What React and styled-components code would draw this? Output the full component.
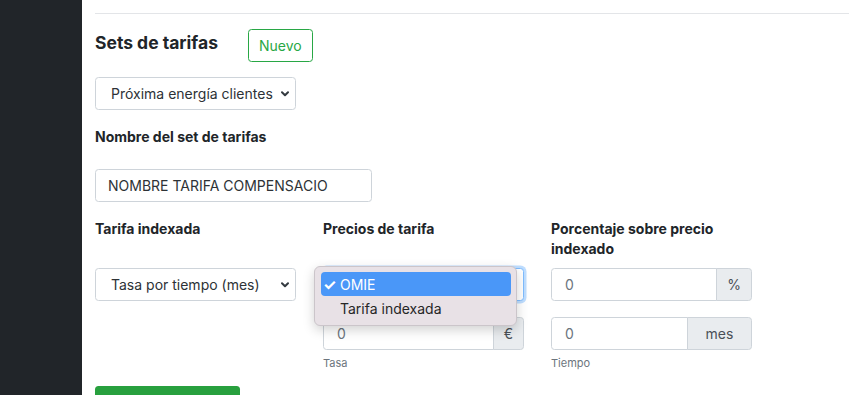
import React from "react";
import styled, { createGlobalStyle } from "styled-components";

const GlobalStyle = createGlobalStyle`
  html, body {
    margin: 0;
    padding: 0;
    background: #fff;
  }
  body {
    font-family: Inter, "Liberation Sans", Arial, sans-serif;
    color: #212529;
    overflow: hidden;
  }
  * {
    box-sizing: border-box;
  }
`;

const chevron =
  "data:image/svg+xml;utf8,<svg xmlns='http://www.w3.org/2000/svg' width='8' height='6' viewBox='0 0 8 6'><path d='M1 1.2 L4 4.2 L7 1.2' fill='none' stroke='%23343a40' stroke-width='2' stroke-linecap='round' stroke-linejoin='round'/></svg>";

export default function App() {
  return (
    <>
      <GlobalStyle />
      <Layout>
        <Sidebar />
        <Main>
          <Divider />
          <TitleRow>
            <Title>Sets de tarifas</Title>
            <OutlineButton>Nuevo</OutlineButton>
          </TitleRow>
          <Select width="201px">Próxima energía clientes</Select>
          <FieldLabel>Nombre del set de tarifas</FieldLabel>
          <TextInput width="277px">NOMBRE TARIFA COMPENSACIO</TextInput>

          <Columns>
            <Column>
              <ColumnLabel>Tarifa indexada</ColumnLabel>
              <Select width="201px">Tasa por tiempo (mes)</Select>
            </Column>

            <Column>
              <ColumnLabel>Precios de tarifa</ColumnLabel>
              <SelectWrap>
                <Select width="201px" focused />
                <Popup>
                  <PopupItem active>
                    <Check>✓</Check>OMIE
                  </PopupItem>
                  <PopupItem>Tarifa indexada</PopupItem>
                </Popup>
              </SelectWrap>
              <InputGroup>
                <GroupInput>0</GroupInput>
                <Addon>€</Addon>
              </InputGroup>
              <Help>Tasa</Help>
            </Column>

            <Column>
              <ColumnLabel>Porcentaje sobre precio indexado</ColumnLabel>
              <InputGroup>
                <GroupInput>0</GroupInput>
                <Addon>%</Addon>
              </InputGroup>
              <InputGroup>
                <GroupInput>0</GroupInput>
                <Addon wide>mes</Addon>
              </InputGroup>
              <Help>Tiempo</Help>
            </Column>
          </Columns>

          <SaveButton />
        </Main>
      </Layout>
    </>
  );
}

const Layout = styled.div`
  display: flex;
  width: 851px;
  height: 395px;
  overflow: hidden;
`;

const Sidebar = styled.aside`
  width: 82px;
  flex-shrink: 0;
  background: #212529;
`;

const Main = styled.main`
  flex: 1;
  padding: 13px 2px 0 13px;
  display: flex;
  flex-direction: column;
  align-items: flex-start;

  & > * {
    flex-shrink: 0;
  }
`;

const Divider = styled.hr`
  width: 100%;
  margin: 0;
  border: 0;
  border-top: 1px solid #e3e5e8;
`;

const TitleRow = styled.div`
  display: flex;
  align-items: flex-start;
  gap: 30px;
  margin-top: 15px;
`;

const Title = styled.h5`
  margin: 0;
  font-size: 17.5px;
  font-weight: 700;
  line-height: 28px;
  color: #212529;
`;

const OutlineButton = styled.button`
  height: 33px;
  padding: 0 10px;
  border: 1px solid #28a745;
  border-radius: 3.5px;
  background: #fff;
  color: #28a745;
  font-family: inherit;
  font-size: 14px;
`;

const Select = styled.div`
  width: ${(p) => p.width};
  height: 33px;
  flex-shrink: 0;
  margin-top: ${(p) => (p.focused ? "0" : "15px")};
  padding: 0 28px 0 15px;
  display: flex;
  align-items: center;
  border: 1px solid ${(p) => (p.focused ? "#80bdff" : "#ced4da")};
  border-radius: 3.5px;
  box-shadow: ${(p) => (p.focused ? "0 0 0 2.5px rgba(0, 123, 255, 0.25)" : "none")};
  background: #fff url("${chevron}") no-repeat right 6px center;
  color: #2d3236;
  font-size: 14px;
  white-space: nowrap;
`;

const FieldLabel = styled.label`
  margin-top: 17px;
  font-size: 14px;
  font-weight: 700;
  line-height: 20px;
`;

const TextInput = styled.div`
  width: ${(p) => p.width};
  height: 33px;
  margin-top: 22px;
  padding: 0 12px;
  display: flex;
  align-items: center;
  border: 1px solid #ced4da;
  border-radius: 3.5px;
  color: #2d3236;
  font-size: 14px;
  white-space: nowrap;
`;

const Columns = styled.div`
  display: grid;
  grid-template-columns: repeat(3, 228px);
  margin-top: 17px;
`;

const Column = styled.div`
  display: flex;
  flex-direction: column;
  align-items: flex-start;
  padding-right: 27px;

  & > ${Select} {
    margin-top: 0;
  }
`;

const ColumnLabel = styled.label`
  min-height: 40px;
  margin-bottom: 9px;
  font-size: 14px;
  font-weight: 700;
  line-height: 20px;
`;

const SelectWrap = styled.div`
  position: relative;
`;

const Popup = styled.div`
  position: absolute;
  left: -9px;
  top: -2px;
  width: 203px;
  padding: 5px 5px 5px 6px;
  background: #e8e1e6;
  border: 1px solid #cbc5ca;
  border-radius: 6px;
  box-shadow: 0 4px 12px rgba(0, 0, 0, 0.18);
`;

const PopupItem = styled.div`
  height: 24px;
  display: flex;
  align-items: center;
  padding-left: ${(p) => (p.active ? "2px" : "19px")};
  border-radius: 4px;
  background: ${(p) => (p.active ? "#4a97f8" : "transparent")};
  color: ${(p) => (p.active ? "#fff" : "#262626")};
  font-size: 14px;
`;

const Check = styled.span`
  width: 17px;
  font-size: 15px;
  font-weight: 700;
`;

const InputGroup = styled.div`
  width: 201px;
  height: 33px;
  flex-shrink: 0;
  display: flex;
  margin-top: 16px;

  ${ColumnLabel} + & {
    margin-top: 0;
  }
`;

const GroupInput = styled.div`
  flex: 1;
  padding: 0 13px;
  display: flex;
  align-items: center;
  border: 1px solid #ced4da;
  border-radius: 3.5px 0 0 3.5px;
  color: #6c757d;
  font-size: 14px;
`;

const Addon = styled.div`
  width: ${(p) => (p.wide ? "65px" : "auto")};
  min-width: 31px;
  padding: 0 10px;
  display: flex;
  align-items: center;
  justify-content: center;
  margin-left: -1px;
  background: #e9ecef;
  border: 1px solid #ced4da;
  border-radius: 0 3.5px 3.5px 0;
  color: #495057;
  font-size: 14px;
`;

const Help = styled.small`
  margin-top: 6px;
  font-size: 11px;
  line-height: 14px;
  color: #6c757d;
`;

const SaveButton = styled.button`
  width: 145px;
  height: 33px;
  margin-top: 16px;
  border: 0;
  border-radius: 3.5px;
  background: #28a03e;
`;
